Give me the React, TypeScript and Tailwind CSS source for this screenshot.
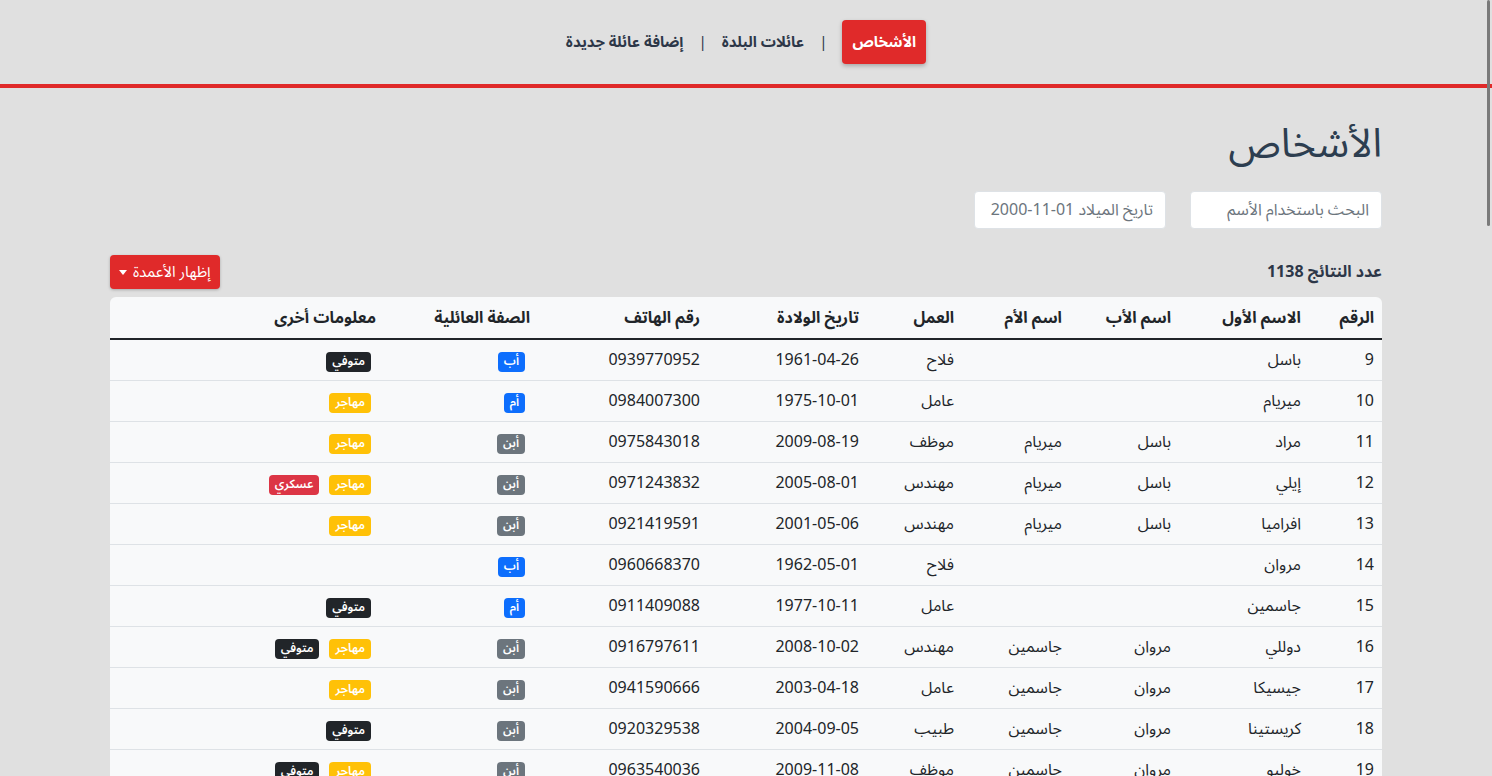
const font = { fontFamily: '"Noto Sans Arabic", "Noto Sans", "DejaVu Sans", sans-serif' }

type Person = {
  id: number
  first: string
  father: string
  mother: string
  job: string
  birth: string
  phone: string
  role: string
  tags: string[]
}

const people: Person[] = [
  { id: 9, first: 'باسل', father: '', mother: '', job: 'فلاح', birth: '1961-04-26', phone: '0939770952', role: 'أب', tags: ['متوفي'] },
  { id: 10, first: 'ميريام', father: '', mother: '', job: 'عامل', birth: '1975-10-01', phone: '0984007300', role: 'أم', tags: ['مهاجر'] },
  { id: 11, first: 'مراد', father: 'باسل', mother: 'ميريام', job: 'موظف', birth: '2009-08-19', phone: '0975843018', role: 'أبن', tags: ['مهاجر'] },
  { id: 12, first: 'إيلي', father: 'باسل', mother: 'ميريام', job: 'مهندس', birth: '2005-08-01', phone: '0971243832', role: 'أبن', tags: ['مهاجر', 'عسكري'] },
  { id: 13, first: 'افراميا', father: 'باسل', mother: 'ميريام', job: 'مهندس', birth: '2001-05-06', phone: '0921419591', role: 'أبن', tags: ['مهاجر'] },
  { id: 14, first: 'مروان', father: '', mother: '', job: 'فلاح', birth: '1962-05-01', phone: '0960668370', role: 'أب', tags: [] },
  { id: 15, first: 'جاسمين', father: '', mother: '', job: 'عامل', birth: '1977-10-11', phone: '0911409088', role: 'أم', tags: ['متوفي'] },
  { id: 16, first: 'دوللي', father: 'مروان', mother: 'جاسمين', job: 'مهندس', birth: '2008-10-02', phone: '0916797611', role: 'أبن', tags: ['مهاجر', 'متوفي'] },
  { id: 17, first: 'جيسيكا', father: 'مروان', mother: 'جاسمين', job: 'عامل', birth: '2003-04-18', phone: '0941590666', role: 'أبن', tags: ['مهاجر'] },
  { id: 18, first: 'كريستينا', father: 'مروان', mother: 'جاسمين', job: 'طبيب', birth: '2004-09-05', phone: '0920329538', role: 'أبن', tags: ['متوفي'] },
  { id: 19, first: 'خوليو', father: 'مروان', mother: 'جاسمين', job: 'موظف', birth: '2009-11-08', phone: '0963540036', role: 'أبن', tags: ['مهاجر', 'متوفي'] },
]

const tagColor: Record<string, string> = {
  'متوفي': 'bg-[#212529]',
  'مهاجر': 'bg-[#ffc107]',
  'عسكري': 'bg-[#dc3545]',
}

function Badge({ label, className }: { label: string; className: string }) {
  return (
    <span
      className={`mx-[5px] inline-flex h-5 items-center rounded-[4px] px-[6px] text-[12px] font-semibold leading-none text-white ${className}`}
    >
      {label}
    </span>
  )
}

export default function App() {
  const cols = [
    { label: 'الرقم', w: 'w-[73px]' },
    { label: 'الاسم الأول', w: 'w-[130px]' },
    { label: 'اسم الأب', w: 'w-[109px]' },
    { label: 'اسم الأم', w: 'w-[108px]' },
    { label: 'العمل', w: 'w-[95px]' },
    { label: 'تاريخ الولادة', w: 'w-[159px]' },
    { label: 'رقم الهاتف', w: 'w-[170px]' },
    { label: 'الصفة العائلية', w: 'w-[154px]' },
    { label: 'معلومات أخرى', w: '' },
  ]

  return (
    <div dir="rtl" style={font} className="relative h-[776px] overflow-hidden bg-[#e0e0e0] text-[#212529]">
      <header className="border-b-4 border-[#e02a2a]">
        <nav className="flex h-[84px] items-center justify-center gap-[15px] text-[15px] font-bold text-[#2d3748]">
          <a className="flex h-11 items-center rounded-[4px] bg-[#e02a2a] px-[10px] text-white shadow-[0_2px_4px_rgba(0,0,0,0.25)]">
            الأشخاص
          </a>
          <span className="font-normal">|</span>
          <a>عائلات البلدة</a>
          <span className="font-normal">|</span>
          <a>إضافة عائلة جديدة</a>
        </nav>
      </header>

      <main className="mx-auto w-[1272px] pt-[33px]">
        <h1 className="text-[40px] font-normal leading-[1.2] text-[#2d3e50]">الأشخاص</h1>

        <div className="mt-[22px] flex gap-6">
          <input
            placeholder="البحث باستخدام الأسم"
            className="h-[38px] w-[192px] rounded-[4px] border border-[#dee2e6] bg-white px-3 text-[16px] placeholder:text-[#6c757d]"
          />
          <input
            placeholder="تاريخ الميلاد 01-11-2000"
            className="h-[38px] w-[192px] rounded-[4px] border border-[#dee2e6] bg-white px-3 text-[16px] placeholder:text-[#6c757d]"
          />
        </div>

        <div className="mt-[26px] flex h-[34px] items-center justify-between">
          <span className="text-[16px] font-bold text-[#2d3748]">عدد النتائج 1138</span>
          <button className="flex h-[34px] items-center gap-[6px] rounded-[4px] bg-[#e02a2a] px-[9px] text-[15px] text-white shadow-[0_1px_3px_rgba(0,0,0,0.25)]">
            إظهار الأعمدة
            <svg width="8" height="5" viewBox="0 0 8 5">
              <path d="M0 0h8L4 5z" fill="white" />
            </svg>
          </button>
        </div>

        <div className="mt-2 overflow-hidden rounded-t-[6px] bg-[#f8f9fa]">
          <table className="w-full table-fixed border-collapse text-right text-[16px]">
            <thead>
              <tr className="h-[42px] border-b-2 border-[#212529]">
                {cols.map((c) => (
                  <th key={c.label} className={`px-2 font-bold ${c.w}`}>
                    {c.label}
                  </th>
                ))}
              </tr>
            </thead>
            <tbody>
              {people.map((p) => (
                <tr key={p.id} className="h-[41px] border-b border-[#dee2e6]">
                  <td className="px-2">{p.id}</td>
                  <td className="px-2">{p.first}</td>
                  <td className="px-2">{p.father}</td>
                  <td className="px-2">{p.mother}</td>
                  <td className="px-2">{p.job}</td>
                  <td className="px-2">{p.birth}</td>
                  <td className="px-2">{p.phone}</td>
                  <td className="px-2">
                    <Badge label={p.role} className={p.role === 'أبن' ? 'bg-[#6c757d]' : 'bg-[#0d6efd]'} />
                  </td>
                  <td className="px-2">
                    {p.tags.map((t) => (
                      <Badge key={t} label={t} className={tagColor[t]} />
                    ))}
                  </td>
                </tr>
              ))}
            </tbody>
          </table>
        </div>
      </main>

      <div className="absolute right-[2px] top-0 h-[226px] w-[3px] rounded-full bg-[#7a7a7a]" />
    </div>
  )
}
